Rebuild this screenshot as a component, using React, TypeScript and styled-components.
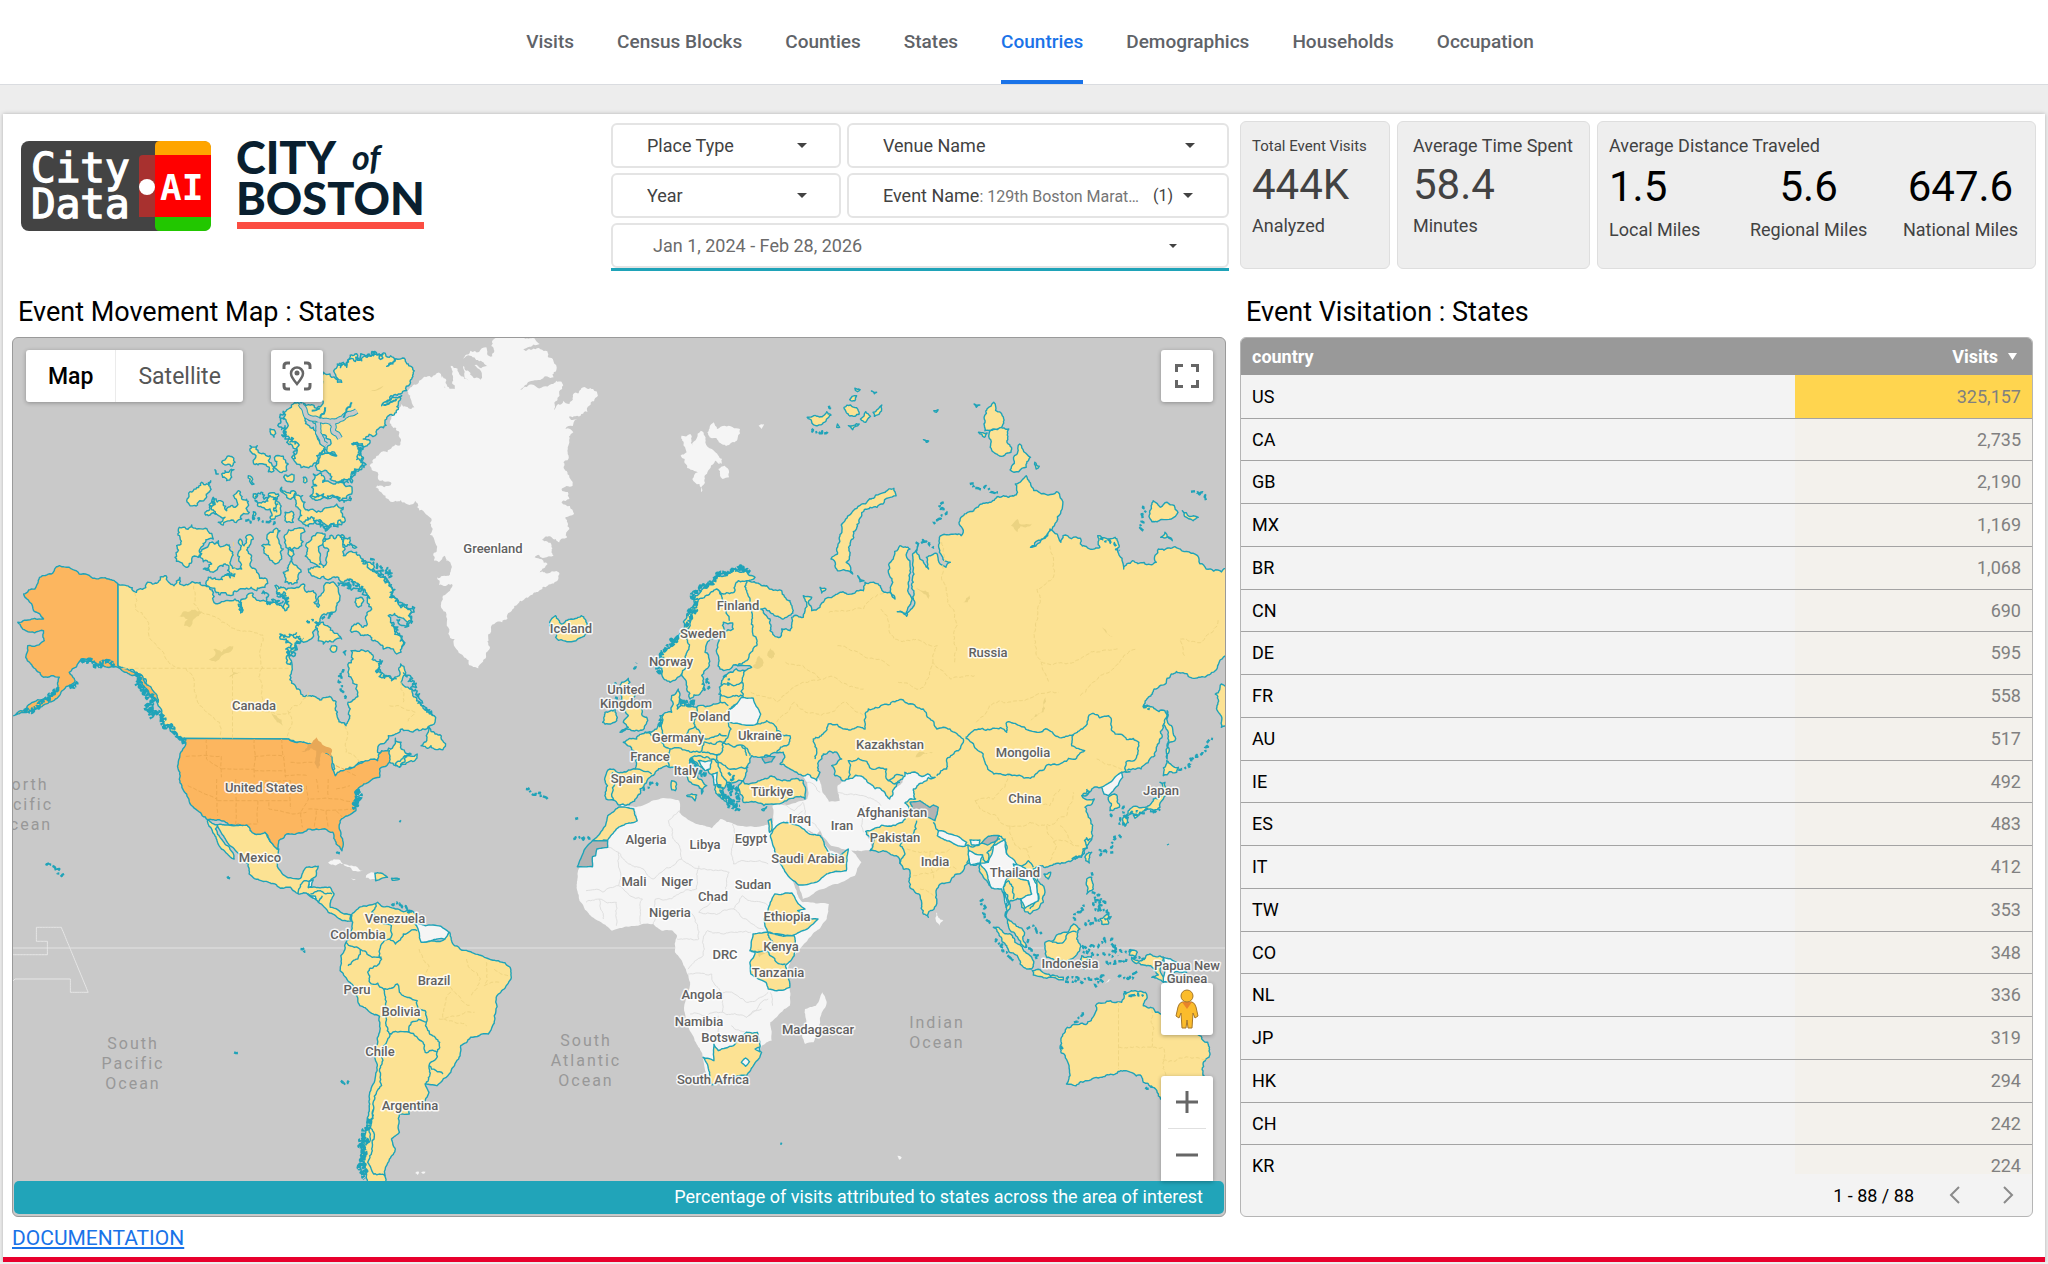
import React from "react";
import styled, { createGlobalStyle, css } from "styled-components";

/* ---------- theme ---------- */

const TEAL = "#1fa3b8";
const SEA = "#c9c9c9";
const LAND = "#f5f5f5";
const LOW = "#fce293";
const HIGH = "#fcb65f";

const GlobalStyle = createGlobalStyle`
  *, *::before, *::after { box-sizing: border-box; }
  body {
    margin: 0;
    background: #ededed;
    font-family: Roboto, "Liberation Sans", sans-serif;
    color: #000;
  }
  button, select { font-family: inherit; }
`;

/* ---------- map geometry ---------- */

// Each letter names a survey sheet: its origin on the map plane and its scale.
const SHEETS: Record<string, [number, number, number, number]> = {
  A: [0, 330, 2.529, 3],
  B: [560, 330, 2.306, 3],
  C: [0, 780, 2.529, 3],
  D: [560, 740, 2.306, 3],
  E: [170, 340, 3, 3],
  F: [590, 540, 3, 3],
  G: [900, 740, 3, 3],
};

type Pt = [number, number];

function parse(src: string): Pt[][] {
  let sheet = SHEETS.A;
  const out: Pt[][] = [[]];
  src.trim().split(/\s+/).forEach((tok) => {
    if (tok === "|") out.push([]);
    else if (SHEETS[tok]) sheet = SHEETS[tok];
    else {
      const [x, y] = tok.split(",").map(Number);
      out[out.length - 1].push([sheet[0] + x / sheet[2], sheet[1] + y / sheet[3]]);
    }
  });
  return out;
}

function noise(a: Pt, b: Pt) {
  const s = Math.sin((a[0] + b[0]) * 12.9898 + (a[1] + b[1]) * 78.233) * 43758.5453;
  return (s - Math.floor(s)) * 2 - 1;
}

// Midpoint displacement, which gives straight runs a natural coast.
function crinkle(a: Pt, b: Pt, amount: number, out: Pt[]) {
  const dx = b[0] - a[0];
  const dy = b[1] - a[1];
  const len = Math.hypot(dx, dy);
  if (len < 2.5) {
    out.push(b);
    return;
  }
  const k = noise(a, b) * Math.min(amount, 4 / len);
  const mid: Pt = [(a[0] + b[0]) / 2 - dy * k, (a[1] + b[1]) / 2 + dx * k];
  crinkle(a, mid, amount, out);
  crinkle(mid, b, amount, out);
}

// Long runs along a meridian or a parallel are surveyed borders and stay straight.
function isSurveyed(a: Pt, b: Pt) {
  const dx = Math.abs(a[0] - b[0]);
  const dy = Math.abs(a[1] - b[1]);
  return Math.min(dx, dy) < 1.5 && Math.max(dx, dy) > 50;
}

function trace(src: string, amount: number, closed: boolean) {
  return parse(src)
    .filter((p) => p.length > 1)
    .map((p) => {
      const out: Pt[] = [p[0]];
      const n = closed ? p.length : p.length - 1;
      for (let i = 0; i < n; i++) {
        const next = p[(i + 1) % p.length];
        if (isSurveyed(p[i], next)) out.push(next);
        else crinkle(p[i], next, amount, out);
      }
      return "M" + out.map(([x, y]) => `${x.toFixed(1)} ${y.toFixed(1)}`).join("L") + (closed ? "Z" : "");
    })
    .join("");
}

const GREENLAND = `A 1245,35 1290,22 1340,28 1365,45 1335,55 1300,78 1345,62 1380,65 1398,90 1408,115 1400,145 1370,150 1335,160 1315,182 1350,168 1395,165 1420,158
1415,200 1402,255 1425,215 1440,225 1450,195 1470,178 1500,180 1512,200 1490,230 1470,255 1440,262 1460,272 1430,300 1450,310 1440,340 1438,380 1425,400 1435,430 1448,470 1420,480
1440,510 1420,520 1452,555 1430,565 1440,600 1415,640 1370,632 1395,650 1400,680 1352,685 1385,705 1365,730 1415,735 1412,750 1385,770 1340,800 1315,815 1290,850 1270,880 1250,885
1235,930 1225,990 1210,1018 1185,1005 1165,975 1150,930 1130,890 1118,840 1120,800 1138,785 1143,765 1110,768 1105,745 1135,740 1140,705 1125,680 1110,700 1098,695 1100,640 1090,590 1070,545 1050,515 1000,515
975,500 950,475 990,462 960,455 955,430 935,410 945,390 980,370 1010,350 1010,310 990,290 995,260 1015,225 1040,240 1048,235 1035,180 1060,155 1090,145 1105,180 1095,140 1115,135 1130,185
1120,140 1150,180 1140,110 1165,140 1185,155 1172,110 1215,152 1200,108 1235,115 1225,105 1170,88 1190,65 1230,55 1245,82 1250,65`;

const SVALBARD = `B 280,320 300,315 305,350 325,305 335,340 350,360 372,390 368,405 355,380 345,420 340,430 327,490 305,450 318,430 290,405 278,380 292,370 285,350
| 340,310 355,280 362,300 380,290 415,300 410,325 390,348 365,335 345,325 | 458,290 470,285 465,300 | 362,392 374,390 372,405 | 365,420 380,410 390,445 375,450`;

const AFRICA = `D 140,195 175,205 260,180 275,185 275,220 300,245 350,268 370,240 400,255 470,260 485,255 490,300 515,350 520,400 550,475 560,490 620,495 615,540 580,590 540,650
525,690 530,750 530,800 485,850 488,905 465,920 460,960 430,1010 350,1035 330,960 310,900 290,850 290,780 300,730 290,690 265,640 270,590 260,575 235,575 215,555 180,560 120,575
75,535 45,485 40,455 45,385 80,305 110,300 130,250 145,215 | 565,810 590,800 605,760 615,790 600,850 585,910 565,915 558,890 568,850`;

const NEAR_EAST = `D 490,200 560,185 570,180 570,130 545,95 585,102 600,130 605,160 620,188 645,185 640,140 660,120 700,110 740,150 760,180 768,150 790,130 790,100 865,95 865,115 820,145
820,190 800,255 755,262 705,280 720,332 670,335 625,320 600,275 590,290 550,262 485,290
| 485,285 500,260 540,250 580,285 610,310 622,335 650,350 668,325 695,370 680,410 640,435 560,480 550,440 520,400`;

const WHITE_ISLES = `C 830,250 860,243 900,262 918,275 890,272 860,252 835,256 | 930,285 948,282 948,300 925,296 | 888,298 900,300 895,304 | 1050,1182 1060,1178 1056,1188 | 1065,1180 1076,1178 1072,1184
| G 110,520 130,545 120,560 110,550 | G 620,728 632,720 615,735 | G 945,690 950,698 | D 778,1250 788,1255 782,1262`;

const EURASIA = `F 240,430 215,405 210,370 225,330 265,300 280,270 290,230 310,200 315,170 350,135 390,110 430,90 470,95 495,115 470,125 530,140 575,155 600,185 610,215 590,235
560,232 510,210 540,240 540,275 570,295 575,270 600,275 605,235 640,235 640,170 665,175 655,190 665,215 690,205 750,160 785,165 820,155 825,130 865,135 915,180 895,100 910,60 930,20 960,30
960,80 955,160 962,195 950,222 922,218 950,232 972,200 970,130 968,80 985,15
B 826,645 830,690 850,720 845,685 870,675 890,715 900,700 875,670 875,625 925,620 920,580 940,550 990,520 1035,505 1055,490 1050,465 1075,440 1105,490 1145,488 1158,540 1140,590 1085,655
1130,600 1155,640 1160,620 1200,628 1200,645 1245,655 1240,620 1280,625 1290,680 1300,720 1320,695 1375,700 1380,660 1430,660 1470,680 1490,720 1560,715 1560,975 1535,980 1520,1000 1500,1035
1410,1035 1370,1080 1345,1130 1395,1145 1390,1190 1375,1260 1340,1320 1305,1330
G 690,98 665,100 640,130 605,145 575,150 545,170 555,180 583,180 555,205 565,235 578,260 578,290 555,330 520,360 480,375 450,380 420,380 400,390 410,410 435,460 430,490 390,525
365,505 360,480 330,485 318,530 345,555 370,575 380,625 355,600 325,560 315,530 322,500 305,440 275,445 240,375 215,375 205,372 190,395 150,430 110,450 108,500 85,535 70,525 45,460 25,390 10,390
D 784,372 775,350 745,335 715,335 725,300 705,277 755,262 790,250 805,210 795,192 820,180 815,150 865,115 830,110 820,100 795,100 790,120 770,150 760,180 740,150 700,115 665,120
F 735,710 725,680 755,660 740,640 700,645 685,670 690,700 680,725 620,700 600,690 570,675 580,640 540,650 510,655 485,650 470,690 465,715 460,725 410,730 400,750 410,790 385,770 375,730 355,695
320,670 300,660 310,690 350,740 335,765 325,740 290,710 260,685 230,680 200,695 185,710 150,750 150,765 125,790 90,798 75,785 48,780 50,700 60,690 135,690 135,640 100,610 140,600 165,580 200,570
210,530 245,520 245,470 265,450 268,490 262,510 320,505 370,495 390,490 390,460 395,430 415,402 465,395 485,385 430,378 390,390 385,350 385,310 430,270 428,252 400,250 400,285 360,300 345,340
355,385 335,410 330,465 300,480 290,450 275,405`;

const ISLANDS_EAST = `F 95,430 115,418 120,430 105,460 135,465 130,490 150,500 155,525 170,535 160,572 130,575 90,580 115,565 100,550 115,530 100,500 90,460
| F 45,520 75,510 80,545 55,555 38,550 | F 445,740 455,725 500,730 540,712 600,725 640,725 645,780 590,785 545,795 500,790 460,790 450,765
| F 245,725 258,730 256,755 245,752 | F 290,770 320,768 315,785 | F 270,480 290,485 285,500 272,498 | F 515,812 530,803 522,815
| F 690,145 708,150 695,162 | F 803,110 822,125 810,128
| B 770,478 775,500 745,525 715,535 690,580 670,640 660,700 675,735 640,725 625,690 640,675 650,610 680,540 710,515 750,490
| B 1000,220 1020,260 1018,295 980,305 978,265 | B 990,310 1035,300 1040,370 1010,378 992,355 | B 1060,345 1085,385 1075,415 1038,423 1048,380 | B 965,310 985,312 978,325
| B 955,225 968,228 960,235 | B 1360,545 1368,515 1385,535 1400,520 1425,550 1410,570 1365,578 | B 1435,545 1472,565 1460,575 1440,562 | B 1385,625 1395,610 1412,635 | B 1095,400 1105,412 1098,420
| B 570,265 595,262 615,248 625,258 605,285 590,290 | B 655,235 670,228 690,255 680,262 660,250 | B 693,270 705,248 716,262 705,280 | B 722,250 742,228 738,250 725,262 | B 665,290 690,285 675,302
| B 640,285 645,295 638,295 | B 668,212 684,200 680,215 | B 680,178 692,182 686,188 | B 718,186 730,190 725,194 | B 862,245 872,242 868,250 | B 838,332 850,336 845,340
| A 1390,880 1405,860 1420,885 1445,870 1470,860 1485,885 1485,910 1445,938 1405,925 1410,905 1390,890
| B 1560,1060 1525,1065 1515,1130 1525,1195 1560,1180 | B 1400,1145 1410,1190 1418,1235 1405,1240 1400,1290 1398,1200
| G 800,65 835,85 830,100 790,110 | G 780,130 795,130 790,180 780,205 740,210 720,225 690,225 672,230 690,210 735,205 760,180 785,170 | G 670,235 685,235 675,262 | G 700,228 718,228 705,238
| G 625,175 650,168 658,205 630,215 | G 575,340 568,372 557,365 560,345 | G 432,405 452,400 445,420 | G 560,420 575,415 580,450 560,465 | G 600,540 625,525 625,555 605,555
| G 280,565 300,570 345,610 395,655 395,690 360,675 320,620 | G 397,695 440,705 490,715 490,723 440,718 400,708
| G 435,610 460,605 500,580 520,555 540,570 530,600 540,615 515,660 440,655 | G 545,650 575,650 560,665 552,690 545,672 | G 690,635 712,640 705,655 688,648
| G 695,655 725,665 750,645 790,655 790,730 755,715 775,708 765,695 740,680 705,672
| D 1170,865 1225,845 1235,800 1270,785 1295,790 1300,765 1350,760 1345,800 1385,825 1410,850 1425,780 1445,830 1475,890 1498,940 1485,1010 1450,1080 1385,1080 1365,1045 1345,1030 1340,1010 1300,995
1250,1015 1215,1025 1190,1040 1168,1035 1175,1000 1165,950 1155,900`;

const EASTERN_ENCLAVES = `D 135,205 170,210 178,245 130,270 110,303 75,305 105,260 110,230
| D 495,465 535,462 550,495 565,510 548,515 570,535 595,540 570,570 535,590 480,580 470,540 485,490
| D 445,585 485,580 540,590 540,650 520,680 530,745 500,755 480,750 475,730 440,705 438,670 450,640 438,635
| D 330,955 355,965 355,915 365,935 400,920 430,880 455,880 460,935 465,940 430,1010 385,1020 350,1037 345,1000
| D 485,290 500,260 515,250 550,260 575,285 600,290 625,345 645,350 665,330 660,395 610,410 590,430 550,438 520,400 495,330 | D 480,245 487,240 488,275 483,280`;

const WHITE_ENCLAVES = `F 415,515 440,495 455,475 490,478 512,525 500,555 450,555 415,550 | F 325,665 365,665 360,690 345,695 | F 368,705 382,700 382,735 372,738
| D 418,970 428,957 437,968 428,982 | D 450,930 460,925 460,938
| G 115,275 150,285 200,310 195,322 140,305 112,290 | G 210,303 240,303 238,316 215,318 | G 205,335 225,345 248,348 240,372 212,378
| G 315,300 320,345 350,375 360,395 320,420 310,445 322,490 318,505 305,450 275,447 260,400 240,372 265,370 280,320
| G 340,375 370,385 410,435 415,485 375,508 362,480 395,465 385,425 350,415
| G 605,145 630,130 665,100 668,115 635,160 625,170 612,165 | G 790,655 830,670 860,700 825,698 810,728 790,728
| C 1050,430 1075,440 1115,442 1135,460 1125,480 1090,485 1065,490 1060,460 | C 782,308 792,302 788,322 780,326 | C 778,346 798,352 800,360`;

const DISPUTED = `D 75,305 110,305 110,325 85,330 82,350 75,353 75,383 40,383 55,335 | G 30,190 60,185 90,205 100,198 115,205 105,245 85,235 40,215 | G 245,312 265,292 298,290 290,305 262,318
| F 515,655 555,653 545,668 525,672`;

const CANADA = `A 298,765 320,770 345,790 370,765 400,760 420,740 440,770 455,745 465,770 490,760 520,770 540,790
E 130,785 150,792 195,780 205,785 212,822 220,780 235,765 250,765 275,785 315,790 345,815 355,775 330,765 315,740 340,745 380,745 400,735 410,760 430,755 432,790 445,805 460,760 465,735 500,740 505,790
490,820 450,840 430,885 395,905 375,935 360,960 360,1010 380,1050
A 755,1080 800,1105 850,1118 855,1170 875,1190 885,1160 880,1120 905,1090 890,1050 880,1030 893,990 888,965 930,965 965,1000 970,1035 990,1055 1010,1040 1013,1005 1040,1080 1070,1130 1098,1160 1098,1185
1060,1205 1000,1215 975,1240 955,1270 1000,1228 1015,1260 1040,1275 1000,1310 985,1300 975,1265 955,1295 920,1298 880,1320 850,1345 845,1310 830,1280 790,1250 730,1230 470,1230 455,1228 430,1200 400,1130
380,1080 350,1040 310,1020 298,1012
| A 1085,1195 1100,1215 1122,1240 1120,1262 1090,1250 1065,1250 1078,1220 | A 1000,1303 1020,1285 1055,1275 1040,1295 1010,1315`;

const ARCTIC = `E 460,100 480,105 515,130 495,90 520,70 530,85 535,62 555,45 575,65 590,50 615,45 640,42 670,55 650,82 690,60 715,75 730,105 720,135 690,165 660,180 635,200 695,170 685,195
650,240 630,265 620,285 580,300 600,305 545,315 580,330 565,340 580,355 575,380 545,400 545,415 500,430 480,420 470,395 440,375 450,355 500,350 470,335 475,300 455,290 445,265 420,245 400,215 390,190 460,188
| 370,195 388,195 400,215 405,245 430,265 440,290 465,325 460,345 440,350 430,375 410,385 380,375 365,355 380,330 350,310 340,280 355,260 340,240 355,210
| 240,320 262,320 265,340 285,345 300,350 305,375 312,395 295,398 280,375 250,370 258,350 240,335 | 318,350 340,352 355,375 350,395 330,400 320,375 | 345,408 372,408 372,420 345,420
| 155,370 180,352 195,370 165,378 | 155,405 165,395 192,392 185,415 170,425 158,415 | 235,410 245,415 252,435 242,432 | 400,415 410,420 405,432 | 300,270 312,272 312,295 302,285 | 135,392 145,405 138,405
| 50,485 70,455 95,430 122,425 120,455 105,480 85,490 60,500 | 105,520 130,475 160,490 170,515 195,505 200,485 190,470 205,455 215,480 235,495 238,520 215,540 180,545 160,558 145,550 165,535 135,525 115,530
| 255,485 285,490 300,462 325,465 325,530 300,535 300,510 275,505 | 345,520 370,520 370,550 345,545 | 335,445 370,455 375,475 350,475 337,460 | 250,465 262,470 255,480 | 250,518 258,525 248,530
| 375,462 398,470 405,490 415,515 440,520 480,505 520,505 525,540 515,557 460,552 400,555 385,540 392,515 378,485 | 430,405 450,402 458,430 500,430 540,440 545,465 530,478 490,470 420,472 425,445 440,440
| 28,565 65,558 80,570 105,568 130,600 90,630 85,655 65,660 48,685 15,655 20,620 30,595
| 90,655 100,630 145,605 180,625 185,655 200,690 215,690 205,640 210,600 222,620 230,600 230,590 245,590 250,600 238,620 242,670 260,700 290,720 285,745 260,755 225,750 190,760 150,768 110,740 115,715 165,708 195,705 150,680 130,700 100,690 125,675 100,668
| 275,620 300,618 290,600 300,580 330,575 325,600 340,630 335,660 315,675 295,650 | 350,585 370,573 405,578 395,620 385,628 348,625 | 355,630 370,635 365,655 380,680 385,720 370,735 345,730 340,700 355,680
| 430,590 465,585 450,620 450,660 460,685 470,670 460,620 480,590 510,590 520,650 560,640 580,665 610,690 650,720 665,745 660,775 690,800 725,820 720,850 705,865 690,835 655,830 665,860 690,890 695,925 680,945 640,930 600,890
570,885 545,880 550,860 580,865 590,850 605,810 595,770 570,750 540,720 510,725 480,720 440,715 415,690 450,685 415,660 410,640 415,610
| 512,590 540,595 560,625 525,622 | 445,905 460,850 490,880 515,900 480,905 460,915 | 555,790 570,775 578,790 565,805 | 480,930 495,920 500,930 485,938 | 520,940 528,935 526,948`;

const LATIN = `C 525,122 580,138 625,138 645,165 670,160 685,190 700,210 705,210 700,250 720,290 760,298 775,265 805,262 800,290 785,305 780,325 835,325 845,345 835,385 870,405 890,410 890,425 860,420 830,400
805,370 780,345 755,345 735,325 710,328 660,305 630,285 628,255 600,220 570,180 550,140 545,150 560,180 592,240 575,225 550,190 538,160
| 885,420 905,390 935,378 955,370 965,382 1000,390 1040,395 1055,410 1050,435 1070,490 1090,485 1125,480 1137,460 1150,500 1190,518 1225,535 1260,545 1290,565 1292,600 1275,630 1255,655 1250,710
1235,765 1190,775 1165,800 1160,840 1140,880 1105,920 1075,915 1085,940 1075,980 1035,985 1035,1005 1010,1005 1010,1060 990,1080 1000,1110 985,1140 975,1165 975,1215 930,1215 920,1150 925,1060
932,1010 935,940 950,890 960,760 960,712 910,680 885,610 860,575 862,530 875,490 890,465 892,430 | 948,283 962,282 980,295 965,298 950,305 | 990,298 1010,300 992,304`;

const USA = `A 298,765 275,750 240,748 200,735 175,715 150,710 130,735 100,745 88,780 60,795 75,820 85,845 110,870 80,870 45,880 65,905 110,905 112,935 70,950 65,985 90,1020 110,1045 150,1045 145,1080 110,1110
60,1145 35,1160 90,1140 150,1100 190,1055 175,1030 205,990 240,1000 298,1015 345,1040 375,1090 400,1120 390,1090 360,1040 330,1025 298,1010
| A 455,1228 730,1230 800,1250 840,1285 848,1340 880,1320 920,1298 955,1295 965,1265 985,1265 985,1300 960,1320 960,1345
C 920,15 905,30 900,95 880,110 860,125 858,150 868,190 865,215 850,195 842,160 800,150 760,162 725,165 705,185 702,210 685,190 670,160 645,165 625,138 580,138 525,122 500,95 475,55 460,20
A 455,1330 455,1280 470,1240`;

const BORDERS = `C 950,375 940,400 965,430 990,440 985,480 965,495 965,540 930,580 935,610 970,630 975,680 965,712 | C 985,480 1000,495 1020,465 1055,455 | C 875,490 910,510 905,540 880,560 | C 910,510 935,530 965,535
| C 970,630 1005,615 1010,640 1055,665 1055,690 1075,695 1078,730 1040,730 1035,760 990,765 975,710 | C 985,765 970,800 960,870 965,920 945,990 945,1060 940,1110 930,1150 945,1185 975,1190
| C 1035,760 1070,790 1075,820 1105,820 1112,790 1078,730 | C 1105,820 1085,860 1120,885 | C 1085,860 1075,915 | C 755,345 765,310 785,305 | C 785,345 810,335 840,345 | C 805,370 815,350 | C 945,990 925,1100
| F 675,660 670,600 715,555 765,570 825,570 835,510 920,485 955,495 1000,510 1040,570 1080,570 1120,600 1105,635 1070,660 1070,690 1040,710
| F 775,720 775,665 805,658 845,690 890,690 895,725 940,710 | F 895,725 915,735 930,730
| B 935,1225 965,1200 1030,1210 1030,1180 1060,1190 1100,1210 1160,1225 1185,1215 1180,1250 1210,1265 1160,1300 1140,1305 1085,1348 1000,1335 980,1300 960,1260 935,1228
| B 1185,1215 1205,1200 1225,1155 1265,1160 1280,1215 1335,1240 1330,1280 1305,1300 1305,1330
| G 100,250 115,275 205,318 240,315 295,290 310,300 320,345 350,378 385,365 400,385 | G 50,245 35,290 5,300 0,320 15,345 0,375 | G 205,318 210,340 200,372 | G 245,348 262,370 280,320 300,300
| G 455,610 490,610 510,580 530,580 | G 310,445 325,425 340,480 | G 360,480 395,465 385,425 350,415 | G 390,395 410,435 415,485 390,510
| F 275,405 285,370 290,300 300,240 320,190 380,150 400,165 435,155 445,125 470,125 | F 380,150 415,200 418,245 | F 470,160 485,220 490,290 500,320 470,365 440,380 | F 470,125 470,160
| F 465,395 460,440 460,475 440,495 415,515 | F 395,440 430,440 460,430 | F 385,465 430,470 460,470 | F 390,490 415,500 | F 415,550 415,590 400,610 | F 500,555 530,545 560,575 600,590 590,620 560,640
| F 320,505 315,560 335,595 370,595 410,590 | F 315,560 290,590 305,610 340,600 | F 220,525 215,570 225,590 | F 165,580 200,600 240,630 230,660 235,685 | F 240,630 290,635 330,640 340,610 400,610 395,640 370,645 335,640
| F 300,660 330,650 370,660 390,690 400,715 410,730 | F 395,640 380,650 385,670 410,685 455,685 475,685 | F 400,612 460,620 480,650 | F 455,620 470,650 | F 135,690 185,705 | F 68,700 75,735 70,785
| D 480,580 485,635 | D 440,637 480,637 520,675`;

const PROVINCES = `A 340,790 342,840 370,870 380,930 405,960 430,1005 455,1018 | A 310,1018 730,1018 | A 490,770 490,825 560,880 665,918 665,1018 | A 470,1018 500,1120 555,1180 560,1228 | A 588,1018 588,1228 | A 662,1018 668,1150 735,1150
| A 780,1090 728,1145 728,1228 | A 872,1190 875,1270 910,1298 | A 590,640 590,750 | A 985,1130 1010,1130 1050,1150 1030,1180 | A 1013,1040 1020,1120
| C 1060,510 1085,560 1075,590 | C 1100,600 1150,640 1190,680 | C 1180,540 1215,600 1190,650 | C 1140,640 1120,720 1180,740 | C 1230,550 1225,620 1265,610 | C 1110,720 1200,700 | C 1250,570 1285,590
| D 1288,790 1288,990 | D 1288,925 1390,925 1390,1070 | D 1365,810 1365,925 | D 1390,962 1498,960
| B 880,640 880,740 910,850 910,1000 | B 1130,650 1135,750 1100,780 1095,930 1110,1000 1130,1060 | B 640,950 700,980 760,1010 | B 620,850 700,840 750,790 | B 740,840 770,930 870,950 860,1000
| B 440,1090 500,1120 560,1060 640,1050 700,1080 | B 500,1180 540,1120 600,1160 660,1120 700,1160 | B 520,1000 560,1010 600,1050 | B 1110,1000 1200,990 1290,960 | B 1200,1100 1240,1050 1300,980 1330,960 | B 1440,980 1430,930 1480,940 1520,870
| B 960,1180 990,1130 1080,1110 1150,1090 | B 780,1060 830,1080 860,1000 900,1050 960,1040
| G 225,185 280,180 330,100 | G 225,185 240,210 320,260 390,250 | G 330,260 360,330 400,320 | G 390,250 450,260 500,230 520,160 | G 440,260 470,320 450,370 | G 480,260 520,320 | G 380,330 390,365 | G 400,180 450,200 480,150
| G 590,60 640,80 690,95 | G 460,310 540,320 | G 20,330 80,340 150,330 | G 40,410 100,400 170,390 | G 60,450 100,470 | G 90,340 100,420`;

const STATES = `A 470,1282 560,1282 | C 475,20 548,60 | A 522,1230 522,1290 560,1320 | A 560,1282 560,1345 | A 643,1230 643,1345 | A 560,1320 643,1320 | A 643,1282 720,1282 | A 712,1230 722,1345 | A 643,1325 722,1325
| C 548,0 550,110 | C 596,0 596,138 | C 550,65 735,65 | C 652,65 652,135 600,135 | C 655,5 735,5 735,90 | C 680,70 680,90 740,105 775,100 | C 775,20 780,60 760,100 765,145 | C 780,90 895,90 | C 800,95 795,145 | C 825,95 830,145
| C 850,95 870,120 | C 785,60 860,60 895,70 | C 830,0 830,55 | C 800,0 805,40 | C 850,30 885,20 | A 850,1310 900,1340 | A 735,1300 790,1300 | A 720,1340 780,1340`;

const AFRICAN_BORDERS = `D 275,215 250,245 280,360 215,420 135,340 110,325 | D 135,340 135,440 60,455 | D 398,255 400,375 480,375 | D 390,400 280,360 | D 390,400 385,460 320,520 | D 320,380 315,450 220,480 | D 190,480 185,555
| D 220,480 215,555 | D 135,440 190,480 | D 300,520 320,600 270,600 | D 320,520 400,510 470,570 | D 400,510 420,470 480,500 | D 340,575 440,580 | D 340,575 330,650 295,690 | D 295,705 350,705 370,760 430,790 480,760
| D 375,760 375,820 300,825 | D 375,820 430,835 480,780 | D 365,900 365,830 | D 430,835 465,810 | D 430,880 395,860 | D 90,480 100,540 | D 60,490 90,480 130,490 130,560 | D 170,205 180,250 | D 485,760 490,800
| D 500,190 540,215 560,190 | D 560,190 580,250 600,275 | D 570,130 600,160 | D 640,160 700,170 740,200 | D 700,200 700,280 | D 560,215 520,250`;

const FRAYED = `F 215,400 210,365 230,325 270,295 | F 285,260 295,220 320,185 310,165 360,130 410,105 440,90 480,100 | A 340,1035 365,1085 385,1125 410,1160 445,1215 465,1245 | A 350,1050 375,1110 | A 378,1130 385,1170
| C 935,1020 925,1050 918,1100 915,1150 922,1200 | C 925,1080 920,1140 925,1190 | F 385,735 400,775 415,795 440,800 | F 410,740 440,750 445,790 | F 270,490 290,495 315,488 | F 205,560 215,540
| F 300,660 320,685 345,700 | A 60,1145 110,1115 150,1080 | A 205,1000 240,1005 290,1010 | A 175,1075 190,1060 | C 905,30 912,55 900,90 | C 905,35 900,80`;

// Coasts cut by many small fjords: drawn thin with a strong zigzag.
const FJORDS = `E 580,660 610,690 650,720 665,745 660,775 690,800 725,820 715,860 690,840 | E 505,740 540,745 580,760 600,780 | E 215,790 210,820 | E 320,770 350,780 345,815 | E 275,765 300,790 340,785 | E 660,850 690,890 695,925
| E 340,215 345,260 345,300 380,330 370,360 | E 550,310 580,325 565,345 580,370 545,400 545,420 500,430 | E 420,470 480,472 540,470 | E 500,75 540,60 600,50 640,45 | E 400,550 460,555 520,550 | E 255,470 300,470 320,520
| E 130,475 120,500 140,525 | E 630,960 640,1010 680,1020 | A 1020,1030 1045,1085 1070,1130 1095,1160 | A 740,920 725,970 735,1000 | E 380,880 350,950 | G 545,170 560,150 | G 575,300 550,335 515,360`;

const SPECKS = `C 115,255 135,262 150,270 162,285 | C 760,510 775,518 | C 1330,30 1355,40 1385,60 | C 1450,180 1475,182 1495,172 | C 1010,125 1014,128 | C 592,820 602,822 | C 862,905 882,905 | C 990,375 1040,390 | C 850,222 862,218
| C 575,292 582,298 | A 620,575 700,575 | E 630,680 660,720 | E 600,660 660,710 | E 350,940 400,900 | E 410,845 450,860 | E 520,740 580,745 | E 520,990 525,1080 | E 320,760 350,800 | E 455,840 490,820
| B 885,520 885,560 865,585 | B 945,465 1010,490 | B 820,640 865,655 | B 1245,630 1290,665 | B 1345,530 1345,605 | B 1455,488 1490,515 | B 1345,1130 1360,1140 | B 340,1080 345,1060 | B 580,300 620,305 | B 620,230 625,240
| G 835,92 870,70 905,45 940,0 | G 630,325 665,295 | G 598,350 640,340 | G 803,315 805,318 | G 250,480 252,510 262,545 275,560 | G 285,600 320,640 340,665 | G 385,600 395,640 410,660 | G 575,460 600,490 620,520 620,545
| G 590,470 615,495 | G 580,490 610,520 | G 525,545 540,520 558,498 | G 560,560 600,540 | G 500,722 550,722 610,715 | G 590,745 610,730 | G 550,625 580,620 610,612 615,595 | G 640,600 650,640 | G 575,640 595,640
| G 620,665 680,660 | G 660,630 690,630 | G 680,715 715,695 | G 545,620 560,645 | G 655,715 690,710 | G 495,728 530,728 | G 380,570 425,585 | G 700,660 735,660 | G 670,200 672,230 690,235 | G 660,235 670,260
| G 630,225 632,235 | G 575,400 578,410 | F 78,430 75,450 | F 130,390 140,372 | F 75,475 90,480 | F 345,455 362,420 | F 400,415 415,440 | F 160,755 200,740 | F 415,808 450,808 | D 35,240 42,238 | D 1185,850 1205,820
| D 1155,920 1160,930 | D 1350,1045 1365,1040 | D 508,1213 512,1215 | D 1300,760 1345,765 | F 415,700 430,790 | F 405,770 450,800 | G 585,480 600,510 | G 640,615 655,650 | G 610,640 640,650 | G 690,225 780,210`;

const LAKES_HIGH = "A 760,1268 790,1240 800,1225 820,1250 840,1262 838,1285 815,1270 805,1320 795,1300 800,1265 785,1258";
const LAKES_LOW = `A 450,865 485,842 515,850 490,870 480,895 465,890 475,870 | A 528,992 545,975 540,960 560,970 590,952 560,980 545,998 | A 580,1045 590,1028 610,1030 590,1038 | A 685,1145 700,1160 715,1190 700,1180 | A 935,188 970,170 950,185
| B 445,1010 460,980 468,1010 450,1018 | B 478,980 485,958 496,975 488,990 | B 820,1285 830,1268 860,1270 835,1278 | B 1085,1175 1110,1150 1120,1105 1115,1150 | B 930,820 945,795 940,820 | B 820,780 850,790 850,810 835,790
| B 1040,590 1055,570 1060,585 1090,580 1062,592 1055,610 | B 1250,895 1275,925 1262,915 | D 455,630 475,640 460,655`;
const CHANNELS = "E 392,195 405,218 422,238 450,244 490,247 520,236 560,216 | E 443,250 450,290 468,318 | E 484,252 510,298";
const CREEKS = "E 448,238 466,205 | E 425,215 450,208 | E 520,236 545,190 | E 450,345 468,330 | E 500,350 480,342 | E 165,708 195,712 | E 640,198 680,180";
const ANTIMERIDIAN = "C 0,527 120,527 120,487 92,487 92,445 155,445 223,640 178,640 178,600 38,600 33,606";

type Place = [string, number, number];
const PLACES: Place[] = [
  ["Greenland", 493, 550], ["Iceland", 571, 630], ["Canada", 254, 707], ["United States", 264, 789], ["Mexico", 260, 859],
  ["Venezuela", 395, 920], ["Colombia", 358, 936], ["Brazil", 434, 982], ["Peru", 357, 991], ["Bolivia", 401, 1013],
  ["Chile", 380, 1053], ["Argentina", 410, 1107], ["Finland", 738, 607], ["Sweden", 703, 635], ["Norway", 671, 663],
  ["United", 626, 691], ["Kingdom", 626, 705], ["Poland", 710, 718], ["Ukraine", 760, 737], ["Germany", 678, 739],
  ["France", 650, 758], ["Italy", 686, 772], ["Spain", 627, 780], ["Türkiye", 772, 793], ["Russia", 988, 654],
  ["Kazakhstan", 890, 746], ["Mongolia", 1023, 754], ["China", 1025, 800], ["Japan", 1161, 792], ["Iraq", 800, 820],
  ["Iran", 842, 827], ["Afghanistan", 892, 814], ["Pakistan", 895, 839], ["Algeria", 646, 841], ["Libya", 705, 846],
  ["Egypt", 751, 840], ["Saudi Arabia", 808, 860], ["India", 935, 863], ["Thailand", 1015, 874], ["Mali", 634, 883],
  ["Niger", 677, 883], ["Sudan", 753, 886], ["Chad", 713, 898], ["Nigeria", 670, 914], ["Ethiopia", 787, 918],
  ["Kenya", 781, 948], ["DRC", 725, 956], ["Tanzania", 778, 974], ["Angola", 702, 996], ["Namibia", 699, 1023],
  ["Botswana", 730, 1039], ["South Africa", 713, 1081], ["Madagascar", 818, 1031], ["Indonesia", 1070, 965],
  ["Papua New", 1187, 967], ["Guinea", 1187, 980],
];
const OCEANS: Place[] = [
  ["orth", 30, 786], ["cific", 33, 806], ["cean", 31, 826], ["South", 133, 1045], ["Pacific", 133, 1065], ["Ocean", 133, 1085],
  ["South", 586, 1042], ["Atlantic", 586, 1062], ["Ocean", 586, 1082], ["Indian", 937, 1024], ["Ocean", 937, 1044],
];

/* ---------- layout ---------- */

const Tabs = styled.nav`
  display: flex;
  justify-content: center;
  gap: 43px;
  height: 85px;
  padding-left: 12px;
  background: #fff;
  border-bottom: 1px solid #dadce0;
`;

const Tab = styled.a<{ $active?: boolean }>`
  display: flex;
  align-items: center;
  padding-top: 3px;
  font-size: 19px;
  font-weight: 500;
  text-decoration: none;
  color: ${(p) => (p.$active ? "#1a73e8" : "#5f6368")};
  border-bottom: 4px solid ${(p) => (p.$active ? "#1a73e8" : "transparent")};
  border-radius: 2px 2px 0 0;
`;

const Report = styled.main`
  margin: 29px 3px 0;
  padding: 7px 9px 0;
  background: #fff;
  box-shadow: 0 0 4px rgba(0, 0, 0, 0.25);
  border-bottom: 5px solid #e8002d;
`;

const Columns = styled.div`
  display: grid;
  grid-template-columns: minmax(0, 1214fr) minmax(0, 796fr);
  column-gap: 14px;
`;

const Banner = styled.header`
  display: flex;
  justify-content: space-between;
  align-items: flex-start;
  margin-right: -3px;
`;

const Logos = styled.div`
  display: flex;
  gap: 24px;
  padding: 20px 0 0 9px;
`;

const Filters = styled.form`
  display: grid;
  grid-template-columns: 230px 382px;
  gap: 5px 6px;
  padding-top: 2px;
`;

const fieldLook = css`
  width: 100%;
  height: 45px;
  border: 2px solid #e4e4e4;
  border-radius: 6px;
  background: #fff;
  color: #424242;
  font-size: 18px;
  padding: 0 34px;
`;

const Field = styled.label`
  display: grid;
  align-items: center;
  > * { grid-area: 1 / 1; }
  > svg { justify-self: end; margin-right: 34px; pointer-events: none; }
`;

const Select = styled.select`
  ${fieldLook}
  appearance: none;
`;

const PickerButton = styled.button<{ $muted?: boolean }>`
  ${fieldLook}
  display: flex;
  align-items: center;
  text-align: left;
  ${(p) => p.$muted && css`color: #6b6b6b; padding: 0 50px 0 40px;`}
  > svg { margin-left: auto; }
`;

const Picked = styled.span`
  flex: 1;
  min-width: 0;
  overflow: hidden;
  white-space: nowrap;
  text-overflow: ellipsis;
  color: #757575;
  font-size: 16px;
  > b { font-weight: 400; font-size: 18px; color: #424242; }
`;

const Count = styled.span`
  margin: 0 10px 0 8px;
  font-size: 16px;
`;

const DateRow = styled.div`
  grid-column: 1 / -1;
  border-bottom: 3px solid ${TEAL};
`;

const Cards = styled.div`
  display: grid;
  grid-template-columns: 150fr 193fr 439fr;
  gap: 7px;
  height: 148px;
`;

const Card = styled.section<{ $inset?: boolean }>`
  padding: 14px 0 0 ${(p) => (p.$inset ? 15 : 11)}px;
  background: #eee;
  border: 1px solid #dedede;
  border-radius: 6px;
  color: #424242;
  min-width: 0;
`;

const CardTitle = styled.h3<{ $small?: boolean }>`
  margin: 0;
  font-size: ${(p) => (p.$small ? 15 : 18)}px;
  line-height: 20px;
  font-weight: 400;
  white-space: nowrap;
`;

const Metrics = styled.div`
  display: grid;
  grid-template-columns: 141fr 153fr auto;
  justify-items: start;
  padding-right: 17px;
`;

const Metric = styled.div<{ $dark?: boolean; $center?: boolean }>`
  display: flex;
  flex-direction: column;
  font-size: 18px;
  line-height: 24px;
  white-space: nowrap;
  > strong {
    font-size: 42px;
    font-weight: 400;
    line-height: ${(p) => (p.$dark ? 62 : 58)}px;
    text-align: ${(p) => (p.$center ? "center" : "left")};
    color: ${(p) => (p.$dark ? "#000" : "#424242")};
  }
`;

const Heading = styled.h2`
  margin: 0;
  padding: 24px 6px 8px;
  font-size: 27px;
  line-height: 34px;
  font-weight: 400;
`;

const Panel = styled.section`
  position: relative;
  display: flex;
  flex-direction: column;
  height: 880px;
  overflow: hidden;
  border: 1px solid #9a9a9a;
  border-radius: 6px;
`;

const MapPanel = styled(Panel)`
  background: ${SEA};
`;

const MapCanvas = styled.svg`
  display: block;
  flex: 1;
  min-height: 0;
  width: 100%;
`;

const PlaceLabel = styled.text`
  font: 500 13px Roboto, "Liberation Sans", sans-serif;
  fill: #616161;
  stroke: rgba(255, 255, 255, 0.85);
  stroke-width: 3px;
  stroke-linejoin: round;
  paint-order: stroke;
  text-anchor: middle;
`;

const OceanLabel = styled.text`
  font: 400 16px Roboto, "Liberation Sans", sans-serif;
  letter-spacing: 2px;
  fill: #989898;
  text-anchor: middle;
`;

const MapCaption = styled.p`
  margin: 0 1px 2px;
  padding: 0 21px;
  height: 33px;
  background: #21a4b9;
  border-radius: 5px;
  color: #fff;
  font-size: 18px;
  line-height: 32px;
  text-align: right;
`;

const Floating = styled.div<{ $top?: number; $bottom?: number; $left?: number; $right?: number }>`
  position: absolute;
  display: flex;
  background: #fff;
  border-radius: 3px;
  box-shadow: 0 1px 4px rgba(0, 0, 0, 0.3);
  ${(p) => p.$top !== undefined && `top: ${p.$top}px;`}
  ${(p) => p.$bottom !== undefined && `bottom: ${p.$bottom}px;`}
  ${(p) => p.$left !== undefined && `left: ${p.$left}px;`}
  ${(p) => p.$right !== undefined && `right: ${p.$right}px;`}
`;

const ZoomStack = styled(Floating)`
  flex-direction: column;
  border-radius: 3px 3px 0 0;
  > hr { width: 38px; margin: 0 auto; border: 0; border-top: 1px solid #e0e0e0; }
`;

const MapType = styled.button<{ $on?: boolean }>`
  height: 52px;
  padding: 0 22px;
  border: 0;
  border-left: ${(p) => (p.$on ? 0 : 1)}px solid #ebebeb;
  background: none;
  font-size: 23px;
  font-weight: ${(p) => (p.$on ? 500 : 400)};
  color: ${(p) => (p.$on ? "#000" : "#565656")};
`;

const IconButton = styled.button`
  display: grid;
  place-items: center;
  width: 52px;
  height: 52px;
  padding: 0;
  border: 0;
  background: none;
`;

const TablePanel = styled(Panel)`
  margin-right: 3px;
  background: #f3f3f3;
  border-color: #b5b5b5;
`;

const TableClip = styled.div`
  flex: 1;
  min-height: 0;
  overflow: hidden;
`;

const Table = styled.table`
  width: 100%;
  border-collapse: collapse;
  table-layout: fixed;
  font-size: 18px;
  th, td { padding: 0 11px; text-align: left; }
  th { height: 37px; background: #999; color: #fff; font-weight: 700; }
  th:last-child, td:last-child { width: 30%; text-align: right; }
  tbody tr { height: 43px; border-bottom: 1px solid #a3a3a3; }
  tbody tr:nth-child(4n + 2) { height: 42px; }
`;

const SortButton = styled.button`
  padding: 0 4px 0 0;
  border: 0;
  background: none;
  color: inherit;
  font-size: inherit;
  font-weight: inherit;
  > svg { margin-left: 10px; vertical-align: 3px; }
`;

const Visits = styled.td<{ $top?: boolean }>`
  color: #808080;
  background: ${(p) => (p.$top ? "#ffd54f" : "#f3f1ec")};
`;

const Pager = styled.footer`
  display: flex;
  justify-content: flex-end;
  align-items: center;
  height: 42px;
  padding-right: 12px;
  font-size: 18px;
  > button { display: flex; padding: 0; margin-left: 29px; border: 0; background: none; }
`;

const DocRow = styled.p`
  margin: 0;
  height: 40px;
  line-height: 42px;
  font-size: 21px;
  a { color: #1a73e8; }
`;

/* ---------- pieces ---------- */

const Caret = ({ size = 10, color = "#424242" }: { size?: number; color?: string }) => (
  <svg width={size} height={size / 2} viewBox="0 0 10 5" aria-hidden="true">
    <path d="M0 0H10L5 5Z" fill={color} />
  </svg>
);

const SortMark = () => (
  <svg width="9" height="7" viewBox="0 0 9 7" aria-hidden="true">
    <path d="M0 0H9L4.500 7Z" fill="#fff" />
  </svg>
);

const CityDataLogo = () => (
  <svg width="191" height="90" viewBox="0 0 191 90" role="img" aria-label="CityData.AI">
    <rect width="190" height="90" rx="8" fill="#434343" />
    <path d="M118 76V18A4 4 0 0 1 122 14H134V76Z" fill="#a8312f" />
    <path d="M134 14V5Q134 0 139 0H183Q190 0 190 7V14Z" fill="#ffa500" />
    <path d="M134 14H190V76H134Z" fill="#f00" />
    <path d="M134 76H190V83Q190 90 183 90H139Q134 90 134 85Z" fill="#22c700" />
    <circle cx="126" cy="46" r="8" fill="#fff" />
    <g fill="#fff" fontFamily='"DejaVu Sans Mono", monospace'>
      <g fontSize="41" stroke="#fff" strokeWidth="1.4">
        <text x="10" y="41">City</text>
        <text x="10" y="77">Data</text>
      </g>
      <text x="139" y="59" fontSize="36" fontWeight="700">AI</text>
    </g>
  </svg>
);

const BostonLogo = () => (
  <svg width="190" height="90" viewBox="0 0 190 90" role="img" aria-label="City of Boston">
    <g fill="#091f2f" fontFamily="Lato, sans-serif" fontWeight="900">
      <text x="0" y="33" fontSize="45">CITY</text>
      <text x="116" y="29" fontSize="34" fontStyle="italic" fontWeight="700">of</text>
      <text x="0" y="74" fontSize="45">BOSTON</text>
    </g>
    <rect x="1" y="81" width="187" height="7" fill="#fb4d42" />
  </svg>
);

const Coast = ({ d, fill, edge, rough = 0.2 }: { d: string; fill: string; edge?: boolean; rough?: number }) => (
  <path d={trace(d, rough, true)} fill={fill} stroke={edge ? TEAL : "none"} strokeWidth="1.4" strokeLinejoin="round" />
);

const Line = ({ d, stroke, width = 1, dash, rough = 0.14 }: { d: string; stroke: string; width?: number; dash?: string; rough?: number }) => (
  <path d={trace(d, rough, false)} fill="none" stroke={stroke} strokeWidth={width} strokeDasharray={dash} strokeLinejoin="round" />
);

const WorldMap = () => (
  <MapCanvas viewBox="13 339 1212 843" preserveAspectRatio="xMidYMid slice" role="img" aria-label="World map of visits">
    <path d="M0 949H1240" stroke="#dadada" strokeWidth="1.5" />
    <Line d={ANTIMERIDIAN} stroke="#e6e6e6" rough={0} />
    <Coast d={GREENLAND} fill={LAND} rough={0.26} />
    <Coast d={SVALBARD} fill={LAND} />
    <Coast d={AFRICA} fill={LAND} rough={0.08} />
    <Coast d={NEAR_EAST} fill={LAND} rough={0.08} />
    <Coast d={WHITE_ISLES} fill={LAND} />
    <Line d={AFRICAN_BORDERS} stroke="#dfdfdf" />
    <Coast d={CANADA} fill={LOW} edge rough={0.3} />
    <Coast d={ARCTIC} fill={LOW} edge rough={0.34} />
    <Line d={CHANNELS} stroke={TEAL} width={6} rough={0.2} />
    <Line d={CHANNELS} stroke={SEA} width={4} rough={0.2} />
    <Line d={CREEKS} stroke={TEAL} width={2} rough={0.2} />
    <Coast d={LATIN} fill={LOW} edge rough={0.12} />
    <Coast d={USA} fill={HIGH} edge rough={0.14} />
    <Coast d={EURASIA} fill={LOW} edge rough={0.2} />
    <Coast d={ISLANDS_EAST} fill={LOW} edge />
    <Coast d={EASTERN_ENCLAVES} fill={LOW} edge rough={0.08} />
    <Coast d={LAKES_LOW} fill="#ebd382" />
    <Coast d={LAKES_HIGH} fill="#e8a857" />
    <Line d={PROVINCES} stroke="#efd582" dash="4 2" />
    <Line d={STATES} stroke="#eca850" dash="4 2" rough={0.04} />
    <Line d={BORDERS} stroke={TEAL} width={1.4} rough={0.2} />
    <Coast d={WHITE_ENCLAVES} fill={LAND} edge rough={0.08} />
    <Coast d={DISPUTED} fill="#b3b3b3" edge rough={0.05} />
    <Line d={FJORDS} stroke={TEAL} width={1.5} rough={0.8} />
    <Line d={FRAYED} stroke={TEAL} width={4} dash="5 1 2 1" rough={0.5} />
    <Line d={SPECKS} stroke={TEAL} width={2.4} dash="4 3 2 2 6 3" rough={0.5} />
    {OCEANS.map(([name, x, y], i) => (
      <OceanLabel key={i} x={x} y={y + 5}>{name}</OceanLabel>
    ))}
    {PLACES.map(([name, x, y]) => (
      <PlaceLabel key={name} x={x} y={y + 4}>{name}</PlaceLabel>
    ))}
  </MapCanvas>
);

const ROWS: [string, string][] = [
  ["US", "325,157"], ["CA", "2,735"], ["GB", "2,190"], ["MX", "1,169"], ["BR", "1,068"], ["CN", "690"], ["DE", "595"],
  ["FR", "558"], ["AU", "517"], ["IE", "492"], ["ES", "483"], ["IT", "412"], ["TW", "353"], ["CO", "348"], ["NL", "336"],
  ["JP", "319"], ["HK", "294"], ["CH", "242"], ["KR", "224"],
];

const TABS = ["Visits", "Census Blocks", "Counties", "States", "Countries", "Demographics", "Households", "Occupation"];

const Dropdown = ({ name }: { name: string }) => (
  <Field>
    <Select aria-label={name} defaultValue="">
      <option value="">{name}</option>
    </Select>
    <Caret />
  </Field>
);

export default function App() {
  return (
    <>
      <GlobalStyle />
      <Tabs>
        {TABS.map((t) => (
          <Tab key={t} href="#" $active={t === "Countries"}>{t}</Tab>
        ))}
      </Tabs>
      <Report>
        <Columns>
          <Banner>
            <Logos>
              <CityDataLogo />
              <BostonLogo />
            </Logos>
            <Filters>
              <Dropdown name="Place Type" />
              <Dropdown name="Venue Name" />
              <Dropdown name="Year" />
              <PickerButton type="button">
                <Picked><b>Event Name</b>: 129th Boston Marathon</Picked>
                <Count>(1)</Count>
                <Caret />
              </PickerButton>
              <DateRow>
                <PickerButton type="button" $muted>
                  Jan 1, 2024 - Feb 28, 2026
                  <Caret size={8} />
                </PickerButton>
              </DateRow>
            </Filters>
          </Banner>
          <Cards>
            <Card>
              <CardTitle $small>Total Event Visits</CardTitle>
              <Metric><strong>444K</strong>Analyzed</Metric>
            </Card>
            <Card $inset>
              <CardTitle>Average Time Spent</CardTitle>
              <Metric><strong>58.4</strong>Minutes</Metric>
            </Card>
            <Card>
              <CardTitle>Average Distance Traveled</CardTitle>
              <Metrics>
                <Metric $dark><strong>1.5</strong>Local Miles</Metric>
                <Metric $dark $center><strong>5.6</strong>Regional Miles</Metric>
                <Metric $dark $center><strong>647.6</strong>National Miles</Metric>
              </Metrics>
            </Card>
          </Cards>

          <Heading>Event Movement Map : States</Heading>
          <Heading>Event Visitation : States</Heading>

          <MapPanel>
            <WorldMap />
            <Floating $top={12} $left={13}>
              <MapType type="button" $on>Map</MapType>
              <MapType type="button">Satellite</MapType>
            </Floating>
            <Floating $top={12} $left={258}>
              <IconButton type="button" aria-label="Center map">
                <svg width="30" height="30" viewBox="0 0 30 30" fill="none" stroke="#666" strokeWidth="3">
                  <path d="M2 8V5Q2 2 5 2H8M22 2H25Q28 2 28 5V8M28 22V25Q28 28 25 28H22M8 28H5Q2 28 2 25V22" />
                  <path d="M15 23Q9 16 9 12.500A6 6 0 0 1 21 12.500Q21 16 15 23Z" strokeWidth="2.500" />
                  <circle cx="15" cy="12" r="2.500" fill="#666" stroke="none" />
                </svg>
              </IconButton>
            </Floating>
            <Floating $top={12} $right={12}>
              <IconButton type="button" aria-label="Full screen">
                <svg width="24" height="24" viewBox="0 0 24 24" fill="none" stroke="#666" strokeWidth="3">
                  <path d="M1.500 8V1.500H8M16 1.500H22.500V8M22.500 16V22.500H16M8 22.500H1.500V16" />
                </svg>
              </IconButton>
            </Floating>
            <Floating $bottom={181} $right={12}>
              <IconButton type="button" aria-label="Street view">
                <svg width="24" height="40" viewBox="0 0 24 40">
                  <path d="M7 13H17Q20 14 21 18L23 27L20 29L18 24L17 39H13L12 31L11 39H7L6 24L4 29L1 27L3 18Q4 14 7 13Z" fill="#fbbc2c" stroke="#a5772b" strokeWidth="1" />
                  <path d="M7 13H17L12 20Z" fill="#e8832a" />
                  <circle cx="12" cy="7" r="6" fill="#fbbc2c" stroke="#a5772b" strokeWidth="1" />
                </svg>
              </IconButton>
            </Floating>
            <ZoomStack $bottom={35} $right={12}>
              <IconButton type="button" aria-label="Zoom in">
                <svg width="22" height="22" viewBox="0 0 22 22" stroke="#666" strokeWidth="3"><path d="M0 11H22M11 0V22" /></svg>
              </IconButton>
              <hr />
              <IconButton type="button" aria-label="Zoom out">
                <svg width="22" height="22" viewBox="0 0 22 22" stroke="#666" strokeWidth="3"><path d="M0 11H22" /></svg>
              </IconButton>
            </ZoomStack>
            <MapCaption>Percentage of visits attributed to states across the area of interest</MapCaption>
          </MapPanel>

          <TablePanel>
            <TableClip>
              <Table>
                <thead>
                  <tr>
                    <th scope="col">country</th>
                    <th scope="col"><SortButton type="button">Visits<SortMark /></SortButton></th>
                  </tr>
                </thead>
                <tbody>
                  {ROWS.map(([code, visits], i) => (
                    <tr key={code}>
                      <td>{code}</td>
                      <Visits $top={i === 0}>{visits}</Visits>
                    </tr>
                  ))}
                </tbody>
              </Table>
            </TableClip>
            <Pager>
              <span>1 - 88 / 88</span>
              <button type="button" aria-label="Previous page">
                <svg width="24" height="20" viewBox="0 0 24 20" fill="none" stroke="#8a8a8a" strokeWidth="2"><path d="M16 2L8 10L16 18" /></svg>
              </button>
              <button type="button" aria-label="Next page">
                <svg width="24" height="20" viewBox="0 0 24 20" fill="none" stroke="#8a8a8a" strokeWidth="2"><path d="M8 2L16 10L8 18" /></svg>
              </button>
            </Pager>
          </TablePanel>
        </Columns>
        <DocRow><a href="#documentation">DOCUMENTATION</a></DocRow>
      </Report>
    </>
  );
}
